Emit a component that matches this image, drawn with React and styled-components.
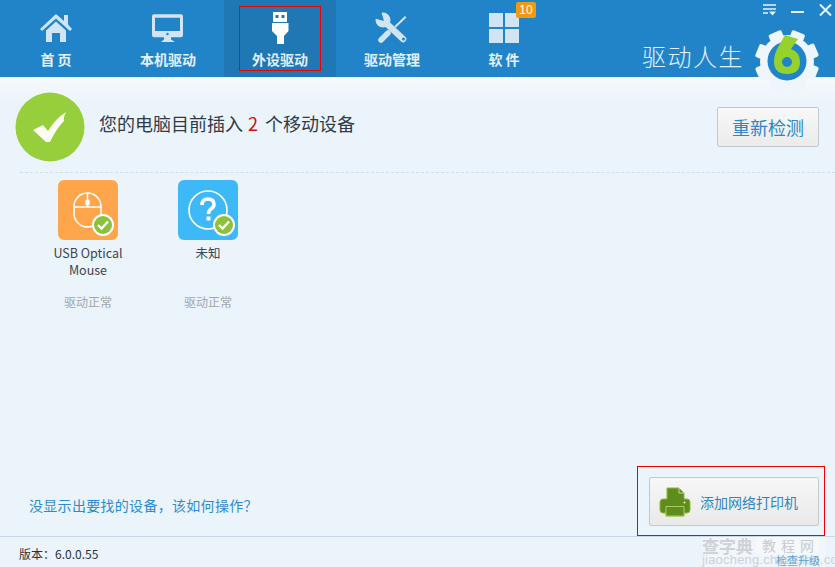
import React from 'react'
import styled, { createGlobalStyle } from 'styled-components'

const Global = createGlobalStyle`
  html, body { margin: 0; padding: 0; overflow: hidden; }
  body { font-family: "Noto Sans CJK SC", "Liberation Sans", sans-serif; }
`

const Window = styled.div`
  position: relative;
  width: 835px;
  height: 567px;
  display: flex;
  flex-direction: column;
  background: #ebf3fb;
  overflow: hidden;
`

const Header = styled.header`
  height: 77px;
  flex: none;
  display: flex;
  background: #2284c8;
`

const Tabs = styled.nav`
  display: flex;
`

const Tab = styled.div`
  position: relative;
  width: 112px;
  height: 77px;
  display: flex;
  flex-direction: column;
  align-items: center;
  padding-top: 12px;
  box-sizing: border-box;
  background: ${p => (p.$active ? '#1f77b4' : 'transparent')};
`

const TabIcon = styled.svg`
  width: 36px;
  height: 34px;
  display: block;
  color: ${p => (p.$active ? '#ffffff' : '#d0e4f3')};
`

const TabLabel = styled.div`
  margin-top: 4px;
  font-size: 14px;
  line-height: 19px;
  font-weight: 700;
  color: #e4f1fb;
  white-space: pre;
`

const Badge = styled.span`
  position: absolute;
  left: 68px;
  top: 2px;
  width: 20px;
  height: 16px;
  border-radius: 2px;
  background: #f09a0d;
  color: #fff;
  font-size: 12px;
  line-height: 16px;
  text-align: center;
  font-family: "Liberation Sans", sans-serif;
`

const RedMark = styled.div`
  position: absolute;
  left: 15px;
  top: 6px;
  width: 80px;
  height: 63px;
  border: 1px solid #f00000;
`

const Brand = styled.div`
  margin-left: auto;
  display: flex;
  flex-direction: column;
  align-items: flex-end;
`

const WindowControls = styled.div`
  display: flex;
  gap: 15px;
  align-items: flex-start;
  padding: 4px 3px 0 0;
  height: 12px;
`

const ControlIcon = styled.svg`
  width: 13px;
  height: 12px;
  display: block;
`

const BrandName = styled.div`
  margin: 23px 91px 0 0;
  font-size: 24px;
  line-height: 34px;
  font-weight: 300;
  letter-spacing: 1.5px;
  color: #e3f0fa;
`

const LogoMark = styled.svg`
  position: absolute;
  left: 754px;
  top: 29px;
  width: 66px;
  height: 66px;
`

const Content = styled.main`
  flex: 1;
  display: flex;
  flex-direction: column;
  background: linear-gradient(#f6fafd 0, #ebf3fb 28px);
`

const StatusRow = styled.section`
  height: 95px;
  flex: none;
  display: flex;
  align-items: center;
  padding: 4px 16px 0 15px;
  box-sizing: border-box;
`

const StatusBadge = styled.svg`
  width: 70px;
  height: 70px;
  display: block;
  flex: none;
`

const StatusText = styled.div`
  margin-left: 14px;
  font-size: 18px;
  line-height: 26px;
  color: #2f3b46;
  position: relative;
  top: -4px;
`

const Count = styled.span`
  color: #d01010;
  margin: 0 3px 0 1px;
`

const RecheckButton = styled.button`
  margin-left: auto;
  width: 102px;
  height: 40px;
  padding: 0;
  font-family: inherit;
  font-size: 18px;
  color: #2f86c2;
  background: linear-gradient(#f8f8f8, #ebebeb);
  border: 1px solid #c6c9cb;
  border-radius: 2px;
`

const Divider = styled.div`
  margin-left: 20px;
  border-top: 1px dashed #cfdfe6;
`

const DeviceList = styled.section`
  flex: 1;
  display: flex;
  align-items: flex-start;
  padding: 7px 0 0 28px;
`

const DeviceCard = styled.div`
  width: 120px;
  display: flex;
  flex-direction: column;
  align-items: center;
`

const DeviceIcon = styled.svg`
  width: 60px;
  height: 60px;
  display: block;
`

const DeviceName = styled.div`
  width: 90px;
  height: 34px;
  margin-top: 4px;
  font-size: 12.5px;
  line-height: 17px;
  text-align: center;
  color: #3b4650;
`

const DeviceState = styled.div`
  margin-top: 15px;
  font-size: 12px;
  line-height: 17px;
  color: #a3a8ac;
`

const BottomRow = styled.section`
  flex: none;
  display: flex;
  align-items: flex-end;
  justify-content: space-between;
  padding: 0 10px 0 29px;
`

const HelpLink = styled.a`
  margin-bottom: 22px;
  font-size: 14px;
  line-height: 18px;
  letter-spacing: 0.3px;
  color: #2c8ccb;
`

const PrinterFrame = styled.div`
  padding: 10px 5px 9px 11px;
  border: 1px solid #ee0000;
`

const PrinterButton = styled.button`
  width: 170px;
  height: 49px;
  padding: 0 0 0 9px;
  display: flex;
  align-items: center;
  gap: 9px;
  font-family: inherit;
  font-size: 14px;
  color: #2f86c2;
  background: linear-gradient(#f7f7f7, #e9e9e9);
  border: 1px solid #c6c9cb;
  border-radius: 2px;
`

const PrinterIcon = styled.svg`
  width: 32px;
  height: 30px;
  display: block;
`

const Footer = styled.footer`
  position: relative;
  height: 31px;
  flex: none;
  display: flex;
  align-items: center;
  padding: 3px 0 0 19px;
  box-sizing: border-box;
  font-size: 12px;
  color: #2b3138;
  border-top: 1px solid #c9d8e6;
`

const Watermark = styled.div`
  position: absolute;
  right: 9px;
  top: 0;
  width: 124px;
  height: 30px;
  color: #cdd2d6;
  background: rgba(255, 255, 255, 0.28);
`

const WatermarkTop = styled.div`
  display: flex;
  align-items: center;
  gap: 3px;
  font-size: 17px;
  line-height: 17px;
  font-weight: 700;
  white-space: nowrap;
`

const WatermarkBox = styled.span`
  padding-left: 6px;
  width: 62px;
  background: #f6f8fa;
  border-radius: 2px;
  color: #c6ccd0;
  font-weight: 400;
  font-size: 14px;
  letter-spacing: 5px;
  box-sizing: border-box;
`

const WatermarkUrl = styled.div`
  font-family: "Liberation Sans", sans-serif;
  font-size: 13px;
  line-height: 12px;
  letter-spacing: 0.2px;
  white-space: nowrap;
`

const UpdateLink = styled.span`
  position: absolute;
  right: 15px;
  bottom: 1px;
  font-size: 11px;
  line-height: 12px;
  color: #2c8ccb;
  opacity: 0.75;
`

const tabIcons = {
  home: (
    <path
      fill="currentColor"
      d="M18 2 L26 9 V3 H30 V12.5 L34 17 L32 19 L18 6.5 L4 19 L2 17 Z M18 9.5 L28 18.5 V30 H22 V21 H14 V30 H8 V18.5 Z"
    />
  ),
  monitor: (
    <g fill="currentColor">
      <path
        fillRule="evenodd"
        d="M4 2.3 H31 Q33 2.3 33 4.3 V23 Q33 25.3 31 25.3 H4 Q2 25.3 2 23 V4.3 Q2 2.3 4 2.3 Z M5 5.7 V19 H30 V5.7 Z"
      />
      <circle cx="17.5" cy="22" r="1.2" fill="#2284c8" />
      <path d="M14 25 H21 V27.5 L25 30 H11 L14 27.5 Z" />
    </g>
  ),
  usb: (
    <g fill="currentColor">
      <path
        fillRule="evenodd"
        d="M11 0 H25 V10 H11 Z M13.5 3 V6 H16.5 V3 Z M19.5 3 V6 H22.5 V3 Z"
      />
      <path d="M10 11 H26.5 V19 L22 24 V32 H15 V24 L10 19 Z" />
    </g>
  ),
  tools: (
    <g>
      <circle cx="9" cy="8" r="7.5" fill="currentColor" />
      <path d="M10 9 L7 -1 L-1 -1 L-1 6 Z" fill="#2284c8" />
      <path d="M12 11 L29 27" stroke="currentColor" strokeWidth="6.5" strokeLinecap="round" />
      <circle cx="29.5" cy="27" r="1.5" fill="#2284c8" />
      <path d="M31.7 4.7 L21 15" stroke="currentColor" strokeWidth="2" />
      <path d="M14 21 L7 28" stroke="currentColor" strokeWidth="5.5" strokeLinecap="round" />
    </g>
  ),
  grid: (
    <g fill="currentColor">
      <rect x="3" y="1" width="14" height="14" />
      <rect x="19" y="1" width="14" height="14" />
      <rect x="3" y="17" width="14" height="14" />
      <rect x="19" y="17" width="14" height="14" />
    </g>
  ),
}

const tabs = [
  { key: 'home', label: '首 页' },
  { key: 'monitor', label: '本机驱动' },
  { key: 'usb', label: '外设驱动', active: true },
  { key: 'tools', label: '驱动管理' },
  { key: 'grid', label: '软 件', badge: 10 },
]

const gearTeeth = [0, 45, 90, 135, 180, 225, 270, 315]

const OkMark = ({ x, y }) => (
  <g transform={`translate(${x} ${y})`}>
    <circle r="11" fill="#ffffff" />
    <circle r="9" fill="#8cc13c" />
    <polyline points="-5,0 -1.5,3.5 5,-3.5" fill="none" stroke="#ffffff" strokeWidth="2.4" />
  </g>
)

export default function App() {
  return (
    <Window>
      <Global />
      <Header>
        <Tabs>
          {tabs.map(t => (
            <Tab key={t.key} $active={t.active}>
              <TabIcon viewBox="0 0 36 34" $active={t.active}>{tabIcons[t.key]}</TabIcon>
              <TabLabel>{t.label}</TabLabel>
              {t.badge && <Badge>{t.badge}</Badge>}
              {t.active && <RedMark />}
            </Tab>
          ))}
        </Tabs>
        <Brand>
          <WindowControls>
            <ControlIcon viewBox="0 0 13 12">
              <path d="M0 1 H13 M0 5 H13 M0 9 H5" stroke="#e6f1fa" strokeWidth="1.6" fill="none" />
              <path d="M6 7.5 H13 L9.5 11.5 Z" fill="#e6f1fa" />
            </ControlIcon>
            <ControlIcon viewBox="0 0 13 12">
              <path d="M0 8 H13" stroke="#e6f1fa" strokeWidth="2" />
            </ControlIcon>
            <ControlIcon viewBox="0 0 13 12">
              <path d="M1 0.5 L12 11.5 M12 0.5 L1 11.5" stroke="#e6f1fa" strokeWidth="2" />
            </ControlIcon>
          </WindowControls>
          <BrandName>驱动人生</BrandName>
        </Brand>
        <LogoMark viewBox="0 0 66 66">
          <g fill="#eef5fb">
            {gearTeeth.map(a => (
              <rect key={a} x="26" y="1" width="14" height="14" rx="2" transform={`rotate(${a + 22} 33 33)`} />
            ))}
            <circle cx="33" cy="33" r="27" />
          </g>
          <circle cx="33" cy="32" r="19.5" fill="#2284c8" />
          <path
            fillRule="evenodd"
            fill="#96d22e"
            d="M31 6 L44 10 L37 20 Q46 23 46 33 Q46 45 33 45 Q20 45 20 32 Q20 26 23 20 Z M33 28 A5 5 0 1 0 33 38 A5 5 0 1 0 33 28 Z"
          />
        </LogoMark>
      </Header>
      <Content>
        <StatusRow>
          <StatusBadge viewBox="0 0 70 70">
            <circle cx="35" cy="35" r="34.5" fill="#97ce3c" />
            <path d="M18 38 L28 33 L33 39 Q40 27 51 20 Q48 26 49 29 Q41 37 35 50 L31 50 Z" fill="#fafcf2" />
          </StatusBadge>
          <StatusText>您的电脑目前插入<Count> 2 </Count>个移动设备</StatusText>
          <RecheckButton>重新检测</RecheckButton>
        </StatusRow>
        <Divider />
        <DeviceList>
          <DeviceCard>
            <DeviceIcon viewBox="0 0 60 60">
              <rect width="60" height="60" rx="6" fill="#ffa64d" />
              <g fill="none" stroke="#fff" strokeWidth="1.5">
                <rect x="16" y="13" width="27" height="34" rx="13.5" />
                <path d="M16 27 H43 M29.5 13 V19 M29.5 24 V27" />
                <rect x="28" y="20" width="3" height="5" rx="1.5" fill="#fff" />
              </g>
              <OkMark x={45} y={45} />
            </DeviceIcon>
            <DeviceName>USB Optical Mouse</DeviceName>
            <DeviceState>驱动正常</DeviceState>
          </DeviceCard>
          <DeviceCard>
            <DeviceIcon viewBox="0 0 60 60">
              <rect width="60" height="60" rx="6" fill="#3eb9f7" />
              <circle cx="30" cy="30" r="19" fill="none" stroke="#fff" strokeWidth="1.6" />
              <path d="M24 25 Q24 19 30 19 Q36 19 36 24.5 Q36 27 33 29 Q30.5 30.5 30.5 34" fill="none" stroke="#fff" strokeWidth="3.6" />
              <rect x="28.5" y="36.5" width="4" height="4" fill="#fff" />
              <OkMark x={46} y={45} />
            </DeviceIcon>
            <DeviceName>未知</DeviceName>
            <DeviceState>驱动正常</DeviceState>
          </DeviceCard>
        </DeviceList>
        <BottomRow>
          <HelpLink>没显示出要找的设备，该如何操作？</HelpLink>
          <PrinterFrame>
            <PrinterButton>
              <PrinterIcon viewBox="0 0 32 30">
                <path
                  fill="#5f8c1c"
                  stroke="#8cbb35"
                  strokeWidth="1"
                  d="M8 1 H20 L25 6 V12 H28 Q31 12 31 15 V23 Q31 26 28 26 H25 V29 H7 V26 H4 Q1 26 1 23 V15 Q1 12 4 12 H8 Z"
                />
                <path d="M7 19.5 H25 V29 H7 Z" fill="#5f8c1c" stroke="#a5cf5a" strokeWidth="1" />
                <path d="M20 1 V6 H25" fill="none" stroke="#c3dc90" strokeWidth="1" />
                <circle cx="25.5" cy="15.5" r="1" fill="#e4f0c8" />
              </PrinterIcon>
              添加网络打印机
            </PrinterButton>
          </PrinterFrame>
        </BottomRow>
      </Content>
      <Footer>
        版本：6.0.0.55
        <Watermark>
          <WatermarkTop>查字典<WatermarkBox>教程网</WatermarkBox></WatermarkTop>
          <WatermarkUrl>jiaocheng.chazidian.com</WatermarkUrl>
        </Watermark>
        <UpdateLink>检查升级</UpdateLink>
      </Footer>
    </Window>
  )
}
